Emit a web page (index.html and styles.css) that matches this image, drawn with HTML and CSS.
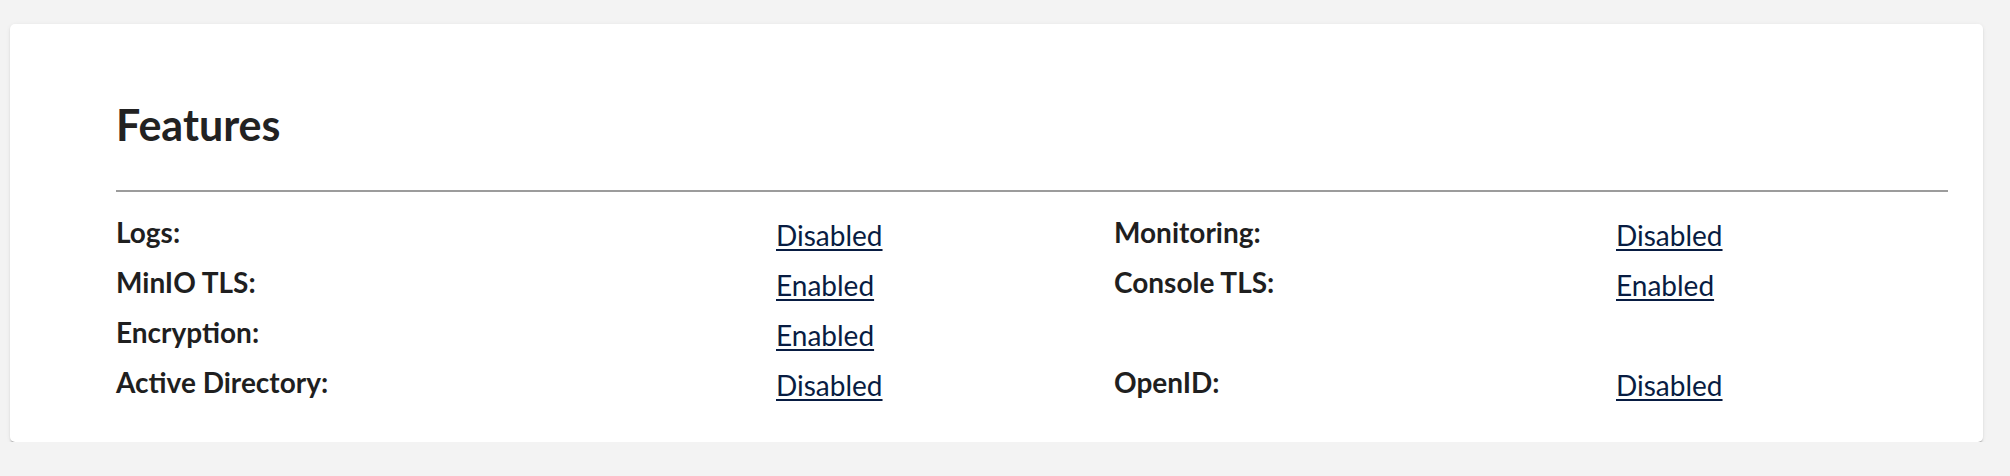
FILE: index.html
```html
<!DOCTYPE html>
<html lang="en">
<head>
<meta charset="utf-8">
<title>Features</title>
<link rel="stylesheet" href="styles.css">
</head>
<body>
<div class="card">
  <h3 class="title">Features</h3>
  <hr class="divider">
  <div class="grid">
    <div class="label">Logs:</div><div class="value"><a href="#">Disabled</a></div>
    <div class="label">Monitoring:</div><div class="value"><a href="#">Disabled</a></div>
    <div class="label">MinIO TLS:</div><div class="value"><a href="#">Enabled</a></div>
    <div class="label">Console TLS:</div><div class="value"><a href="#">Enabled</a></div>
    <div class="label">Encryption:</div><div class="value"><a href="#">Enabled</a></div>
    <div class="label"></div><div class="value"></div>
    <div class="label">Active Directory:</div><div class="value"><a href="#">Disabled</a></div>
    <div class="label">OpenID:</div><div class="value"><a href="#">Disabled</a></div>
  </div>
</div>
</body>
</html>
```
FILE: styles.css
```css
html, body {
  margin: 0;
  padding: 0;
  background: #f3f3f3;
  font-family: Lato, "Open Sans", sans-serif;
}

.card {
  box-sizing: border-box;
  margin: 24px 0 0 10px;
  width: 1973px;
  height: 418px;
  padding: 74px 35px 35px 106px;
  background: #ffffff;
  border-radius: 5px;
  box-shadow: 0 2px 2px -1px rgba(0,0,0,0.35), 0 1px 4px 0 rgba(0,0,0,0.08);
}

.title {
  margin: 0;
  font-size: 43px;
  font-weight: 700;
  line-height: 53px;
  color: #222222;
}

.divider {
  margin: 39px 0 15px 0;
  border: 0;
  height: 2px;
  background: #9c9c9c;
}

.grid {
  display: grid;
  grid-template-columns: 660px 338px 502px 1fr;
  grid-auto-rows: 50px;
}

.label {
  font-size: 28px;
  font-weight: 700;
  line-height: 50px;
  color: #1f1f1f;
}

.value {
  font-size: 28px;
  line-height: 50px;
  padding-top: 3px;
}

.value a {
  color: #081c42;
  text-decoration: underline;
  text-decoration-thickness: 2px;
  text-underline-offset: 3px;
}
```
